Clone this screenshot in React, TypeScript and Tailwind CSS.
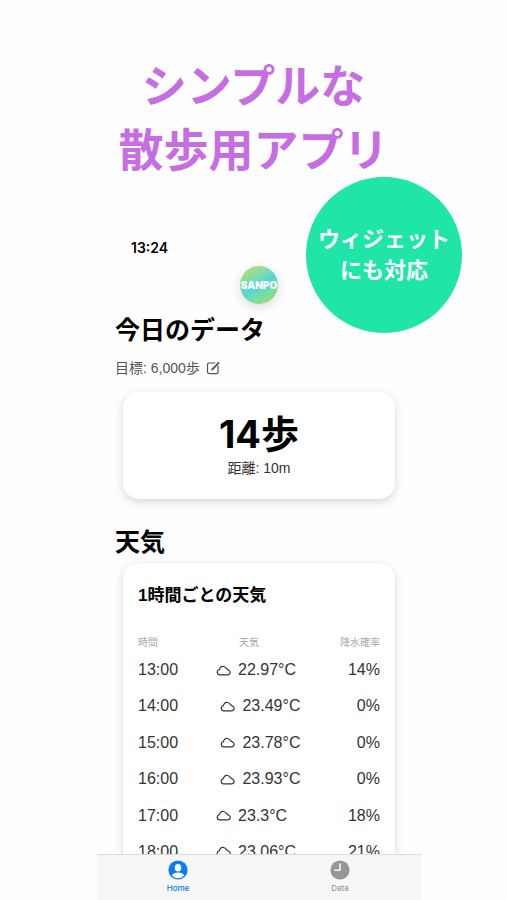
import { useState } from "react";

interface HourlyWeather {
  time: string;
  temperature: number;
  rainChance: number;
}

const HOURLY_WEATHER: HourlyWeather[] = [
  { time: "13:00", temperature: 22.97, rainChance: 14 },
  { time: "14:00", temperature: 23.49, rainChance: 0 },
  { time: "15:00", temperature: 23.78, rainChance: 0 },
  { time: "16:00", temperature: 23.93, rainChance: 0 },
  { time: "17:00", temperature: 23.3, rainChance: 18 },
  { time: "18:00", temperature: 23.06, rainChance: 21 },
];

function CloudIcon() {
  return (
    <svg viewBox="0 0 15 11" className="w-[15px] h-[11px]" fill="none" stroke="currentColor" strokeWidth="1.2" strokeLinejoin="round">
      <path d="M3.2 9.8h8.6a2.4 2.4 0 0 0 .9-4.6L10.300 3.400A3.700 3.700 0 0 0 4.300 2.700C3.800 3.200 3.600 3.900 3.500 4.700A2.600 2.600 0 0 0 3.200 9.800Z" />
    </svg>
  );
}

function EditIcon() {
  return (
    <svg viewBox="0 0 14 14" className="w-3.5 h-3.5" fill="none" stroke="currentColor" strokeWidth="1.2" strokeLinecap="round" strokeLinejoin="round">
      <path d="M8.8 2H3.2A1.700 1.700 0 0 0 1.500 3.700v7.200a1.700 1.700 0 0 0 1.700 1.700h7.200a1.700 1.700 0 0 0 1.700-1.700V5.400" />
      <path d="M12.500 1.600 6.300 7.800l-.5 1.100 1.100-.5 6.100-6.200" />
    </svg>
  );
}

function PersonIcon() {
  return (
    <svg viewBox="0 0 20 20" className="w-5 h-5">
      <circle cx="10" cy="10" r="9.6" fill="currentColor" />
      <ellipse cx="10" cy="7.8" rx="3.3" ry="3.8" fill="#fff" />
      <path d="M3.9 15.6c.7-2 3-3.1 6.1-3.1s5.4 1.1 6.1 3.1A8.3 8.3 0 0 1 10 18.3a8.3 8.3 0 0 1-6.1-2.7Z" fill="#fff" />
    </svg>
  );
}

function ClockIcon() {
  return (
    <svg viewBox="0 0 20 20" className="w-5 h-5">
      <circle cx="10" cy="10" r="9.6" fill="currentColor" />
      <path d="M10 4v6.200H5" fill="none" stroke="#f7f7f7" strokeWidth="1.600" strokeLinecap="round" strokeLinejoin="round" />
    </svg>
  );
}

export default function App() {
  const [tab, setTab] = useState<"home" | "data">("home");

  return (
    <div className="relative flex flex-col h-screen overflow-hidden bg-[#fefefe] text-black font-['Liberation_Sans','Noto_Sans_CJK_JP',sans-serif]">
      <h1 className="pt-14 text-center text-[45px] leading-[64px] font-bold text-[#c76de3]">
        シンプルな
        <br />
        散歩用アプリ
      </h1>

      <p className="absolute right-[45px] top-[177px] flex items-center justify-center w-[156px] h-[156px] rounded-full bg-[#1fe6a8] text-center text-[22px] leading-[31px] font-bold text-white">
        ウィジェット
        <br />
        にも対応
      </p>

      {/* App screen */}
      <div className="flex flex-col flex-1 min-h-0 pl-[97px] pr-[86px]">
        <main className="flex-1 min-h-0 overflow-hidden px-[18px]">
          <div className="mt-[54px] pl-4 text-sm leading-5 font-semibold font-['Inter',sans-serif]">13:24</div>

          <div className="mx-auto mt-2 flex items-center justify-center w-[38px] h-[38px] rounded-full bg-linear-150 from-[#c4dc3c] via-[#4fd8d4] to-[#a4e03c] shadow-[0_3px_12px_rgba(0,0,0,0.15)] text-[10px] font-black font-['Inter',sans-serif] text-white">
            SANPO
          </div>

          <section>
            <h2 className="mt-2.5 text-[25px] leading-8 font-bold">今日のデータ</h2>
            <div className="mt-3 flex items-center gap-1.5 text-sm leading-5 text-[#555]">
              <span>目標: 6,000歩</span>
              <button aria-label="目標を編集">
                <EditIcon />
              </button>
            </div>

            <div className="mx-2 mt-3.5 pt-5 pb-[21px] rounded-2xl bg-white text-center shadow-[0_3px_10px_rgba(0,0,0,0.16)]">
              <p className="text-[38px] leading-[44px] font-bold font-['Inter','Noto_Sans_CJK_JP',sans-serif]">14歩</p>
              <p className="mt-0.5 text-sm leading-5 text-[#333]">距離: 10m</p>
            </div>
          </section>

          <section>
            <h2 className="mt-[27px] text-[25px] leading-8 font-bold">天気</h2>
            <div className="mx-2 mt-[5px] px-[15px] pt-[21px] pb-5 rounded-2xl bg-white shadow-[0_3px_10px_rgba(0,0,0,0.16)]">
              <h3 className="text-[17px] leading-6 font-bold">1時間ごとの天気</h3>
              <table className="block mt-[27px]">
                <thead className="block text-[10px] leading-4 text-[#aaa]">
                  <tr className="flex justify-between">
                    <th className="font-normal">時間</th>
                    <th className="font-normal">天気</th>
                    <th className="font-normal">降水確率</th>
                  </tr>
                </thead>
                <tbody className="mt-[7px] flex flex-col justify-between h-[206px] text-base leading-6 text-[#333]">
                  {HOURLY_WEATHER.map((hour) => (
                    <tr key={hour.time} className="flex justify-between">
                      <td>{hour.time}</td>
                      <td className="flex items-center gap-[7px] w-[94px]">
                        <CloudIcon />
                        {hour.temperature}°C
                      </td>
                      <td>{hour.rainChance}%</td>
                    </tr>
                  ))}
                </tbody>
              </table>
            </div>
          </section>
        </main>

        <nav className="flex h-[46px] border-t border-[#dcdcdc] bg-[#f7f7f7] text-[8px] leading-3 font-medium font-['Inter',sans-serif]">
          <button
            onClick={() => setTab("home")}
            className={`flex-1 flex flex-col items-center gap-0.5 pt-[5px] ${tab === "home" ? "text-[#067cff]" : "text-[#979797]"}`}
          >
            <PersonIcon />
            Home
          </button>
          <button
            onClick={() => setTab("data")}
            className={`flex-1 flex flex-col items-center gap-0.5 pt-[5px] ${tab === "data" ? "text-[#067cff]" : "text-[#979797]"}`}
          >
            <ClockIcon />
            Data
          </button>
        </nav>
      </div>
    </div>
  );
}
